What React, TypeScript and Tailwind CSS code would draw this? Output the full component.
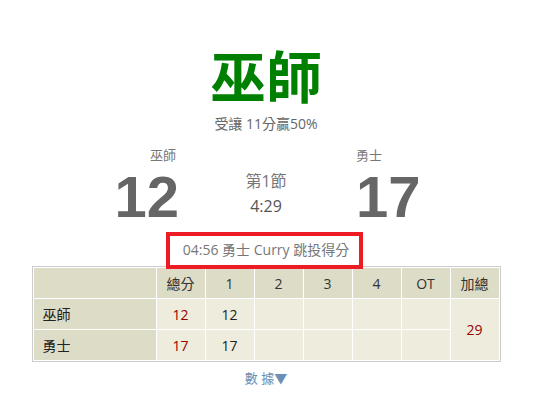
import React from "react";

const cjk = "font-['Open_Sans','Noto_Sans_CJK_TC',sans-serif]";

export default function App() {
  const cols = ["1", "2", "3", "4", "OT"];
  return (
    <div className={`w-[540px] h-[401px] bg-white ${cjk}`}>
      <div className="ml-[32px] w-[468px] pt-[46px] flex flex-col items-center">
        <div className="h-[60px] leading-[60px] text-[56px] font-bold text-[#008000]">巫師</div>
        <div className="mt-[8px] h-[20px] leading-[20px] text-[14px] text-[#666]">受讓 11分贏50%</div>
        <div className="mt-[12px] w-full grid grid-cols-[1fr_180px_1fr]">
          <div className="flex flex-col items-end">
            <div className="h-[18px] leading-[18px] text-[13px] text-[#777]">巫師</div>
            <div className="mt-[3px] mr-[-3px] h-[60px] leading-[60px] text-[58px] font-bold text-[#666] font-['Liberation_Sans',Arial,sans-serif]">12</div>
          </div>
          <div className="flex flex-col items-center pt-[25px]">
            <div className="h-[20px] leading-[20px] text-[16px] text-[#777]">第1節</div>
            <div className="mt-[5px] h-[20px] leading-[20px] text-[16px] text-[#555]">4:29</div>
          </div>
          <div className="flex flex-col items-start">
            <div className="h-[18px] leading-[18px] text-[13px] text-[#777]">勇士</div>
            <div className="mt-[3px] h-[60px] leading-[60px] text-[58px] font-bold text-[#666] font-['Liberation_Sans',Arial,sans-serif]">17</div>
          </div>
        </div>
        <div className="relative mt-[13px] h-[20px] leading-[20px] text-[14px] text-[#777]">
          04:56 勇士 Curry 跳投得分
          <div className="absolute left-[-17px] right-[-14px] top-[-8px] bottom-[-9px] border-[4px] border-[#ed1c24] pointer-events-none" />
        </div>
        <table className="mt-[6px] w-[468px] border border-[#ccc] border-separate border-spacing-[1px] bg-white text-[14px] text-[#222] table-fixed">
          <colgroup>
            <col className="w-[122px]" />
            <col className="w-[48px]" />
            <col className="w-[48px]" />
            <col className="w-[48px]" />
            <col className="w-[48px]" />
            <col className="w-[48px]" />
            <col className="w-[48px]" />
            <col className="w-[48px]" />
          </colgroup>
          <thead>
            <tr className="h-[30px]">
              <th className="bg-[#dddcc6] p-0"></th>
              <th className="bg-[#dddcc6] p-0 font-normal text-[#333]">總分</th>
              {cols.map((c) => (
                <th key={c} className="bg-[#dddcc6] p-0 font-normal text-[#333]">{c}</th>
              ))}
              <th className="bg-[#dddcc6] p-0 font-normal text-[#333]">加總</th>
            </tr>
          </thead>
          <tbody>
            <tr className="h-[30px]">
              <td className="bg-[#dddcc6] p-0 pl-[9px] text-left">巫師</td>
              <td className="bg-[#edecdd] p-0 text-center text-[#990000]">12</td>
              <td className="bg-[#edecdd] p-0 text-center">12</td>
              <td className="bg-[#edecdd] p-0"></td>
              <td className="bg-[#edecdd] p-0"></td>
              <td className="bg-[#edecdd] p-0"></td>
              <td className="bg-[#edecdd] p-0"></td>
              <td rowSpan={2} className="bg-[#edecdd] p-0 text-center text-[#990000]">29</td>
            </tr>
            <tr className="h-[30px]">
              <td className="bg-[#dddcc6] p-0 pl-[9px] text-left">勇士</td>
              <td className="bg-[#edecdd] p-0 text-center text-[#990000]">17</td>
              <td className="bg-[#edecdd] p-0 text-center">17</td>
              <td className="bg-[#edecdd] p-0"></td>
              <td className="bg-[#edecdd] p-0"></td>
              <td className="bg-[#edecdd] p-0"></td>
              <td className="bg-[#edecdd] p-0"></td>
            </tr>
          </tbody>
        </table>
        <div className="mt-[6px] h-[20px] leading-[20px] text-[13px] text-[#6b8fb6]">數 據▼</div>
      </div>
    </div>
  );
}
